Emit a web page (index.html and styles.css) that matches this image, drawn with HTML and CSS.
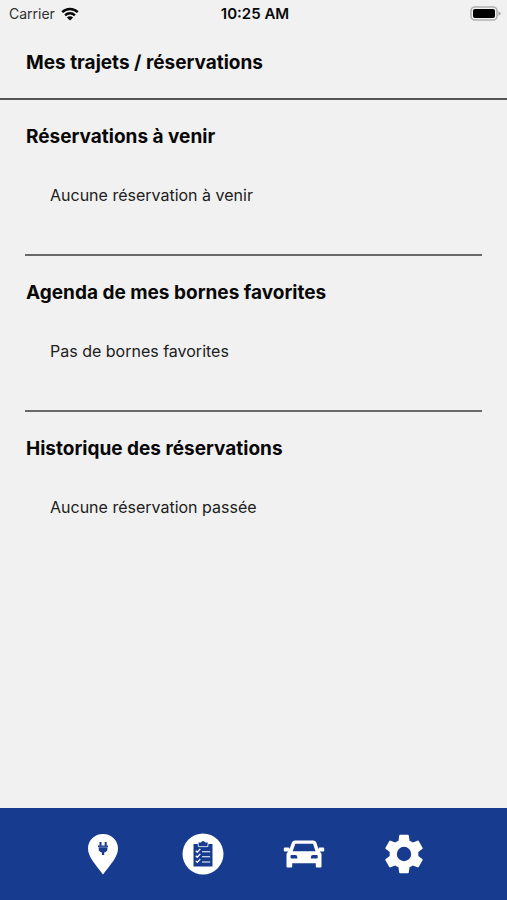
FILE: index.html
```html
<!DOCTYPE html>
<html lang="fr">
<head>
<meta charset="utf-8">
<meta name="viewport" content="width=device-width, initial-scale=1">
<title>Mes trajets / réservations</title>
<link rel="stylesheet" href="styles.css">
</head>
<body>
<div class="status">
  <div class="carrier">
    <span>Carrier</span>
    <svg class="wifi" viewBox="0 0 18 14" aria-hidden="true">
      <path d="M1.200 5.200a11.200 11.200 0 0 1 15.600 0M4.100 8.300a7 7 0 0 1 9.800 0" fill="none" stroke="#080808" stroke-width="2.500"/>
      <path d="M9 13.600 5.900 10.500a4.400 4.400 0 0 1 6.200 0z" fill="#080808"/>
    </svg>
  </div>
  <time class="clock">10:25 AM</time>
  <svg class="battery" viewBox="0 0 31 16" aria-hidden="true">
    <rect x="1" y="1" width="26" height="13" rx="4" fill="#f1f1f1" stroke="#b0b0b0" stroke-width="1.600"/>
    <rect x="3" y="3" width="22" height="9" rx="2" fill="#000"/>
    <path d="M28.400 5.200q2.400.8 2.400 2.300t-2.400 2.300z" fill="#a8a8a8"/>
  </svg>
</div>
<header class="header">
  <h1 class="title">Mes trajets / réservations</h1>
</header>
<main class="content">
  <section class="section">
    <h2 class="title">Réservations à venir</h2>
    <p class="empty">Aucune réservation à venir</p>
  </section>
  <section class="section">
    <h2 class="title">Agenda de mes bornes favorites</h2>
    <p class="empty">Pas de bornes favorites</p>
  </section>
  <section class="section">
    <h2 class="title">Historique des réservations</h2>
    <p class="empty">Aucune réservation passée</p>
  </section>
</main>
<nav class="tabs">
  <a class="tab" href="#bornes" aria-label="Bornes">
    <svg viewBox="0 0 44 44" aria-hidden="true">
      <path d="M22 2C13.600 2 7 8.300 7 16.500 7 25 15 33 22 42.500 29 33 37 25 37 16.500 37 8.300 30.400 2 22 2z" fill="#fff"/>
      <path d="M18.500 10h2v3.500h3.200V10h2v3.500H27V15h-.6v2.200q0 2.500-3.200 3.300V23h-2.300v-2.500q-3.200-.8-3.200-3.300V15H17v-1.500h1.500z" fill="#173c8f"/>
      <path d="M17.700 15.200h8.700" stroke="#8fa2cb" stroke-width=".7"/>
    </svg>
  </a>
  <a class="tab" href="#reservations" aria-label="Réservations" aria-current="page">
    <svg viewBox="0 0 44 44" aria-hidden="true">
      <circle cx="22" cy="22" r="20.500" fill="#fff"/>
      <path d="M12.500 12h5v-1.500H20a2.200 2.200 0 0 1 4.200 0h2.500V12H31.500v22.500h-19z" fill="#173c8f"/>
      <path d="M17.300 12v2.600h9.600V12" fill="none" stroke="#fff" stroke-width=".8"/>
      <path d="M14.800 18.700l1.500 1.500 3-3.300M14.800 23.700l1.500 1.500 3-3.300M14.800 28.900l1.500 1.500 3-3.300" fill="none" stroke="#fff" stroke-width="1.300"/>
      <path d="M21 19.700h8.200M21 24.800h8.200M21 30h8.200" stroke="#fff" stroke-width="1.100"/>
    </svg>
  </a>
  <a class="tab" href="#vehicule" aria-label="Véhicule">
    <svg viewBox="0 0 44 44" aria-hidden="true">
      <path fill="#fff" fill-rule="evenodd" d="M13 8.500h18.200q2.400 0 3.100 2.100l2.300 6.900V16.300q0-.9.900-.9h3.700q1 0 1 1v2q0 1-1 1h-3.400l1.200 1.600q.5.700.5 1.600v12q0 1-1 1h-3.700q-1 0-1-1V31.200H10.200v3.400q0 1-1 1H5.500q-1 0-1-1v-12q0-.9.500-1.600l1.200-1.600H2.800q-1 0-1-1v-2q0-1 1-1h3.700q.9 0 .9.900v1.200l2.500-6.900q.8-2.100 3.100-2.100zM13.300 11.700 10.700 19.200h22.800L31 11.700zM9.500 23q-1 0-1 1v1.500q0 1 1 1h5.800V25q0-2-2-2zM34.700 23q1 0 1 1v1.500q0 1-1 1h-5.800V25q0-2 2-2z"/>
    </svg>
  </a>
  <a class="tab" href="#reglages" aria-label="Réglages">
    <svg viewBox="1 1 22 22" aria-hidden="true">
      <path fill="#fff" d="M19.140 12.940c.04-.3.060-.61.060-.94 0-.32-.02-.64-.07-.94l2.030-1.580c.18-.14.230-.41.120-.61l-1.920-3.320c-.12-.22-.37-.29-.59-.22l-2.390.96c-.5-.38-1.030-.7-1.620-.94l-.36-2.540c-.04-.24-.24-.41-.48-.41h-3.840c-.24 0-.43.17-.47.41l-.36 2.540c-.59.24-1.130.57-1.620.94l-2.390-.96c-.22-.08-.47 0-.59.22L2.740 8.870c-.12.210-.08.470.12.610l2.030 1.580c-.05.3-.09.630-.09.940s.02.640.070.940l-2.030 1.580c-.18.140-.23.410-.12.610l1.920 3.320c.12.220.37.290.59.220l2.390-.96c.5.380 1.030.7 1.620.94l.36 2.540c.05.240.24.410.48.410h3.840c.24 0 .44-.17.470-.41l.36-2.540c.59-.24 1.130-.56 1.620-.94l2.390.96c.22.080.47 0 .59-.22l1.920-3.320c.12-.22.070-.47-.12-.61zM12 15.600a3.600 3.600 0 1 1 0-7.200 3.600 3.600 0 0 1 0 7.200z"/>
    </svg>
  </a>
</nav>
</body>
</html>
```
FILE: styles.css
```css
* {
  box-sizing: border-box;
}

body {
  margin: 0;
  min-height: 100vh;
  display: flex;
  flex-direction: column;
  background: #f1f1f1;
  color: #080808;
  font-family: Inter, "Liberation Sans", sans-serif;
}

.status {
  display: grid;
  grid-template-columns: 1fr auto 1fr;
  align-items: center;
  height: 28px;
  padding: 0 6px 0 9px;
  font-size: 14px;
  line-height: 20px;
}

.carrier {
  display: flex;
  align-items: center;
  gap: 6px;
  color: #303030;
}

.wifi {
  width: 18px;
  height: 14px;
}

.clock {
  font-size: 15px;
  font-weight: 600;
}

.battery {
  justify-self: end;
  width: 31px;
  height: 16px;
}

.header {
  padding: 23px 26px;
  border-bottom: 2px solid #555;
}

.title {
  margin: 0;
  font-size: 19px;
  line-height: 24px;
  font-weight: 700;
}

.content {
  flex: 1;
  padding: 0 25px;
}

.section {
  padding: 25px 1px 47px;
}

.section + .section {
  border-top: 2px solid #6a6a6a;
}

.empty {
  margin: 34px 0 0;
  padding: 0 24px;
  font-size: 16px;
  line-height: 24px;
  color: #202020;
}

.tabs {
  display: grid;
  grid-template-columns: repeat(4, 1fr);
  height: 92px;
  padding: 0 53px;
  background: #173c8f;
}

.tab {
  display: flex;
  align-items: center;
  justify-content: center;
}

.tab svg {
  width: 44px;
  height: 44px;
}
```
